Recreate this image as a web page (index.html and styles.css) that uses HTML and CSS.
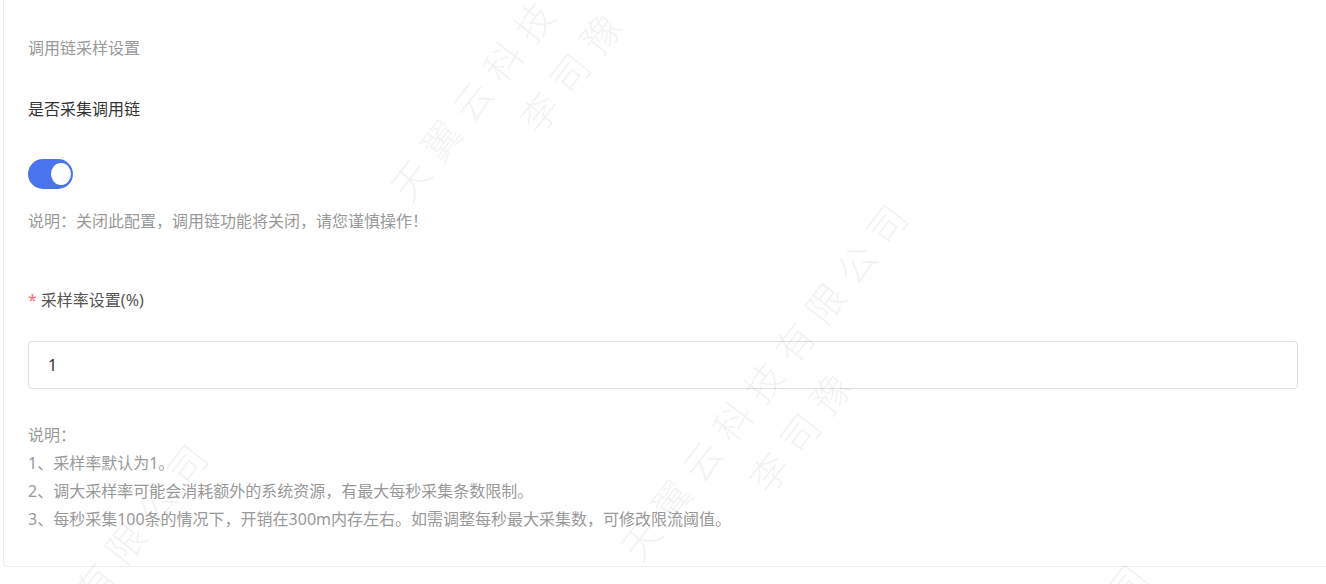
FILE: index.html
```html
<!DOCTYPE html>
<html lang="zh-CN">
<head>
    <meta charset="UTF-8">
    <meta name="viewport" content="width=device-width, initial-scale=1.0">
    <title>调用链采样设置</title>
    <link rel="stylesheet" href="styles.css">
</head>
<body>
    <div class="card">
        <div class="card-title">调用链采样设置</div>

        <div class="form-item">
            <label class="form-label">是否采集调用链</label>
            <div class="switch is-checked"><span class="switch-knob"></span></div>
            <div class="form-tip">说明：关闭此配置，调用链功能将关闭，请您谨慎操作！</div>
        </div>

        <div class="form-item form-item-rate">
            <label class="form-label required" for="rate">采样率设置(%)</label>
            <input class="form-input" id="rate" type="text" value="1">
            <div class="form-notes">
                <div>说明：</div>
                <div>1、采样率默认为1。</div>
                <div>2、调大采样率可能会消耗额外的系统资源，有最大每秒采集条数限制。</div>
                <div>3、每秒采集100条的情况下，开销在300m内存左右。如需调整每秒最大采集数，可修改限流阈值。</div>
            </div>
        </div>
    </div>

    <!-- watermark -->
    <div class="watermark-layer">
        <div class="watermark wm-1"><div>天翼云科技有限公司</div><div class="wm-name">李司豫</div></div>
        <div class="watermark wm-2"><div>天翼云科技有限公司</div><div class="wm-name">李司豫</div></div>
        <div class="watermark wm-3"><div>天翼云科技有限公司</div><div class="wm-name">李司豫</div></div>
        <div class="watermark wm-4"><div>天翼云科技有限公司</div><div class="wm-name">李司豫</div></div>
    </div>
</body>
</html>
```

FILE: styles.css
```css
html, body {
    margin: 0;
    padding: 0;
    background: #fff;
    font-family: "Noto Sans", "Noto Sans CJK SC", sans-serif;
    overflow: hidden;
}
.card {
    margin-left: 3px;
    border-left: 1px solid #ebeef5;
    border-bottom: 1px solid #ebeef5;
    border-bottom-left-radius: 4px;
    padding: 36px 28px 33px 24px;
    font-size: 16px;
    line-height: 24px;
}
.card-title {
    color: #999;
}
.form-item {
    margin-top: 37px;
}
.form-label {
    display: block;
    color: #333;
}
.form-label.required::before {
    content: "*";
    color: #f56c6c;
    margin-right: 4px;
}
.switch {
    position: relative;
    width: 45px;
    height: 30px;
    margin-top: 38px;
    border-radius: 15px;
    background: #dcdfe6;
}
.switch.is-checked {
    background: #4a74ee;
}
.switch-knob {
    position: absolute;
    top: 4px;
    right: 2px;
    width: 20px;
    height: 22px;
    border-radius: 50%;
    background: #fff;
}
.form-tip {
    margin-top: 20px;
    color: #999;
}
.form-item-rate {
    margin-top: 55px;
}
.form-item-rate .form-label {
    color: #555;
}
.form-input {
    display: block;
    box-sizing: border-box;
    width: 100%;
    height: 48px;
    margin-top: 29px;
    padding: 0 19px;
    border: 1px solid #dcdfe6;
    border-radius: 4px;
    font: inherit;
    color: #333;
    background: transparent;
    outline: none;
}
.form-notes {
    margin-top: 32px;
    color: #999;
    line-height: 28px;
}
.watermark-layer {
    position: fixed;
    top: 0;
    left: 0;
    right: 0;
    bottom: 0;
    overflow: hidden;
    pointer-events: none;
}
.watermark {
    position: absolute;
    transform: translate(-50%, -50%) rotate(-52deg);
    font-family: "Noto Sans CJK SC", sans-serif;
    font-weight: 300;
    font-size: 38px;
    line-height: 44px;
    letter-spacing: 12px;
    color: rgba(0, 0, 0, 0.05);
    text-align: center;
    white-space: nowrap;
}
.wm-name {
    margin-top: 16px;
    margin-right: 36px;
}
.wm-1 { left: 560px; top: 35px; }
.wm-2 { left: 790px; top: 395px; }
.wm-3 { left: 90px; top: 635px; }
.wm-4 { left: 1030px; top: 755px; }
```
